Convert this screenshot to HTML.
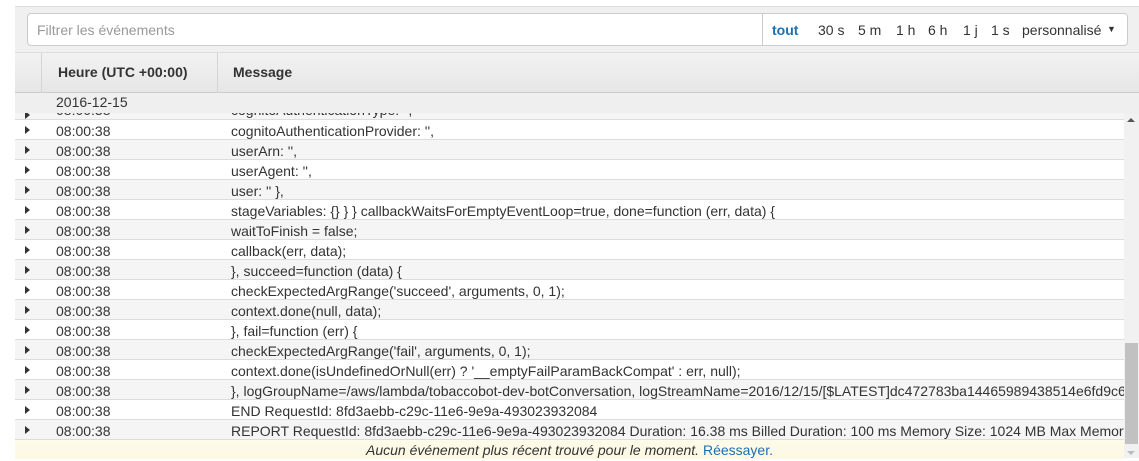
<!DOCTYPE html>
<html><head><meta charset="utf-8"><style>
*{box-sizing:border-box;margin:0;padding:0}
body{width:1139px;height:461px;overflow:hidden;background:#fff;font-family:"Liberation Sans",sans-serif;font-size:14px;color:#333;position:relative}
.top{position:absolute;left:15px;top:6px;width:1124px;height:46px;background:#f0f0f0;border-top:1px solid #ddd}
.filter{position:absolute;left:27px;top:13px;width:736px;height:33px;background:#fff;border:1px solid #ccc;border-radius:4px 0 0 4px;color:#999;padding:8px 9px;font-size:14px}
.range{position:absolute;left:762px;top:13px;width:366px;height:33px;background:#fff;border:1px solid #ccc;border-radius:0 4px 4px 0;padding:8px 0 0 10px;white-space:nowrap}
.range span{position:absolute;top:8px}
.hdr{position:absolute;left:15px;top:52px;width:1124px;height:41px;background:linear-gradient(#f2f2f2,#e6e6e6);border-top:1px solid #ddd;border-bottom:1px solid #ccc;font-weight:bold}
.hdr .d{position:absolute;top:0;height:40px;border-left:1px solid #d4d4d4}
.date{position:absolute;left:15px;top:93px;width:1124px;height:20px;background:#efefef;padding:1px 0 0 41px}
.row{position:absolute;left:15px;width:1109px;height:20px;border-bottom:1px solid #ddd;white-space:nowrap;overflow:hidden}
.row .a{position:absolute;left:10px;top:6px;width:0;height:0;border-left:5px solid #333;border-top:4px solid transparent;border-bottom:4px solid transparent}
.row .t{position:absolute;left:41px;top:3px}
.row .m{position:absolute;left:216px;top:3px}
.sb{position:absolute;left:1124px;top:113px;width:15px;height:345px;background:#f1f1f1}
.thumb{position:absolute;left:1125px;top:343px;width:13px;height:101px;background:#c1c1c1}
.foot{position:absolute;left:15px;top:440px;width:1109px;height:19px;background:linear-gradient(#fdfbe9,#fcf8e3);text-align:center;font-style:italic;padding-top:2px}
.foot a{color:#1a6fb5;font-style:normal;text-decoration:none}
</style></head><body>
<div class="top"></div>
<div class="filter">Filtrer les événements</div>
<div class="range"><span style="left:9px;color:#1a6fb5;font-weight:bold">tout</span><span style="left:55px">30 s</span><span style="left:95px">5 m</span><span style="left:133px">1 h</span><span style="left:165px">6 h</span><span style="left:200px">1 j</span><span style="left:228px">1 s</span><span style="left:259px">personnalisé</span><span style="left:344px;top:10px;font-size:9px">▼</span></div>
<div class="hdr"><div class="d" style="left:26px"></div><div class="d" style="left:202px"></div>
<div style="position:absolute;left:43px;top:11px">Heure (UTC +00:00)</div><div style="position:absolute;left:218px;top:11px">Message</div></div>
<div id="rows"></div>
<div class="row" style="top:100px;height:20px;background:#f5f5f5"><div class="a" style="top:11px"></div><div class="t" style="top:2px">08:00:38</div><div class="m" style="top:2px">cognitoAuthenticationType: '',</div></div>
<div class="date">2016-12-15</div>
<script>
var msgs=["cognitoAuthenticationProvider: '',","userArn: '',","userAgent: '',","user: '' },","stageVariables: {} } } callbackWaitsForEmptyEventLoop=true, done=function (err, data) {","waitToFinish = false;","callback(err, data);","}, succeed=function (data) {","checkExpectedArgRange('succeed', arguments, 0, 1);","context.done(null, data);","}, fail=function (err) {","checkExpectedArgRange('fail', arguments, 0, 1);","context.done(isUndefinedOrNull(err) ? '__emptyFailParamBackCompat' : err, null);","}, logGroupName=/aws/lambda/tobaccobot-dev-botConversation, logStreamName=2016/12/15/[$LATEST]dc472783ba14465989438514e6fd9c67","END RequestId: 8fd3aebb-c29c-11e6-9e9a-493023932084","REPORT RequestId: 8fd3aebb-c29c-11e6-9e9a-493023932084 Duration: 16.38 ms Billed Duration: 100 ms Memory Size: 1024 MB Max Memory Used: 40 MB"];
var h="";msgs.forEach(function(m,i){h+='<div class="row" style="top:'+(120+20*i)+'px;background:'+(i%2?'#f5f5f5':'#fff')+'"><div class="a"></div><div class="t">08:00:38</div><div class="m">'+m.replace(/</g,'&lt;')+'</div></div>';});
document.getElementById('rows').innerHTML=h;
</script>
<div class="sb"></div><div class="thumb"></div>
<div style="position:absolute;left:1127px;top:118px;width:0;height:0;border-bottom:4px solid #555;border-left:4px solid transparent;border-right:4px solid transparent"></div>
<div style="position:absolute;left:1127px;top:451px;width:0;height:0;border-top:4px solid #bbb;border-left:4px solid transparent;border-right:4px solid transparent"></div>
<div class="foot">Aucun événement plus récent trouvé pour le moment. <a>Réessayer.</a></div>
</body></html>
